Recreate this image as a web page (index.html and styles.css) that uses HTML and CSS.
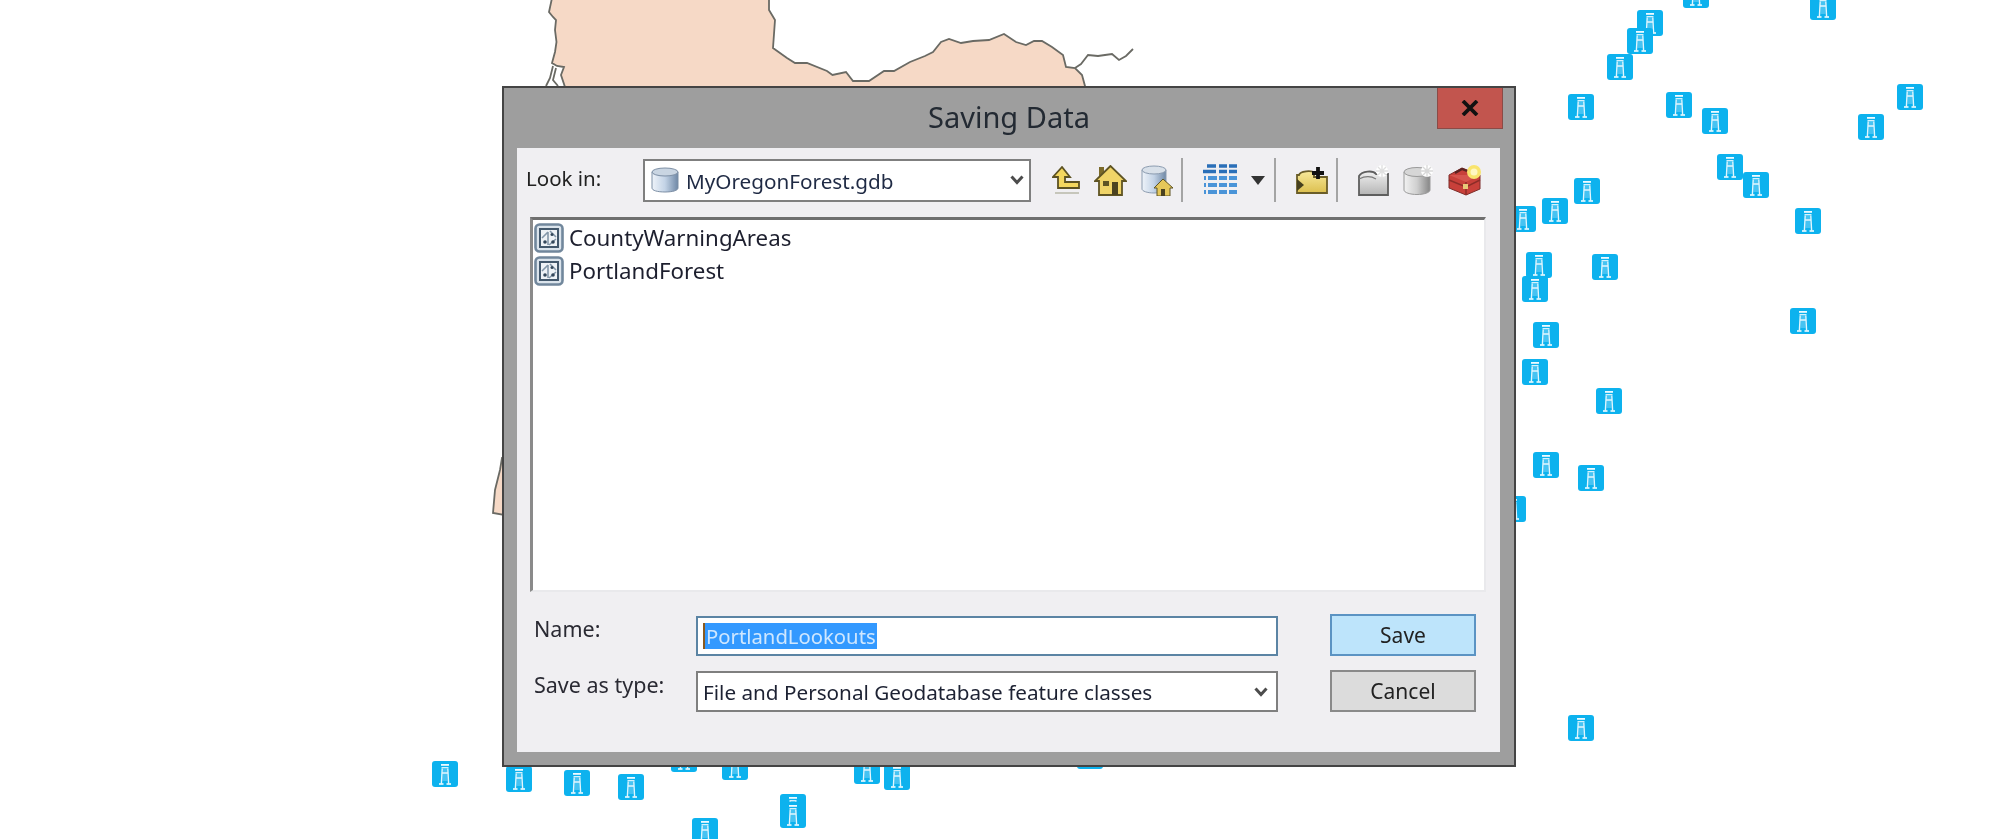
FILE: index.html
```html
<!DOCTYPE html>
<html lang="en">
<head>
  <meta charset="UTF-8">
  <title>Saving Data</title>
  <link rel="stylesheet" href="styles.css">
</head>
<body>

<svg class="defs" width="0" height="0">
  <defs>
    <symbol id="tower" viewBox="0 0 26 26">
      <rect width="26" height="26" rx="3" fill="#0db2ee"/>
      <rect x="9" y="3" width="8" height="1.800" fill="#eefaff"/>
      <rect x="9.500" y="6" width="7" height="1.400" fill="#d4f2fd"/>
      <rect x="10.500" y="8" width="5" height="12" fill="#7fd4f5" opacity=".5"/>
      <path d="M10.200 7.500 9.400 22.500M15.800 7.500l.8 15M10 12h6" stroke="#e2f6fe" stroke-width="1.400" fill="none"/>
      <path d="M7 23h4.500M14.500 23H19" stroke="#fff" stroke-width="1.500"/>
    </symbol>
    <symbol id="feature" viewBox="0 0 30 30">
      <rect x="1.500" y="1.500" width="27" height="27" rx="4" fill="#dbe4ec" stroke="#71879c" stroke-width="2.600"/>
      <rect x="6" y="6" width="18" height="18" fill="#eef2f6" stroke="#43586c" stroke-width="2"/>
      <path d="M8 15l6-6M16 8l6 6M15 22l7-6M14 9v13" stroke="#8497a9" stroke-width="1.600"/>
      <circle cx="11" cy="19" r="1.800" fill="#33475a"/>
      <circle cx="19" cy="19" r="1.800" fill="#33475a"/>
      <circle cx="18" cy="11.500" r="1.500" fill="#33475a"/>
    </symbol>
    <symbol id="chevron" viewBox="0 0 14 12">
      <path d="M1.500 2.500l5.500 6 5.500-6" fill="none" stroke="#4c4c4c" stroke-width="3"/>
    </symbol>
    <linearGradient id="dbBlue" x1="0" x2="1" y1="0" y2="0">
      <stop offset="0" stop-color="#eef3f9"/>
      <stop offset=".5" stop-color="#c3d3e6"/>
      <stop offset="1" stop-color="#6f88a6"/>
    </linearGradient>
    <linearGradient id="dbGrey" x1="0" x2="1" y1="0" y2="0">
      <stop offset="0" stop-color="#f2f2f2"/>
      <stop offset=".5" stop-color="#cfcfcf"/>
      <stop offset="1" stop-color="#868686"/>
    </linearGradient>
    <linearGradient id="folderGrey" x1="0" x2="0" y1="0" y2="1">
      <stop offset="0" stop-color="#f0f0f0"/>
      <stop offset="1" stop-color="#b4b4b4"/>
    </linearGradient>
    <linearGradient id="folderYellow" x1="0" x2="0" y1="0" y2="1">
      <stop offset="0" stop-color="#f7e99a"/>
      <stop offset="1" stop-color="#dcbf4e"/>
    </linearGradient>
  </defs>
</svg>

<div class="screen">

  <!-- map behind the dialog -->
  <div class="map">
    <svg class="land" width="2004" height="839" viewBox="0 0 2004 839">
      <path class="coast" d="M552 -2 549 12 553 17 556 20 555 30 556.500 42 555 52 552 63 557 66 564 67 561 75 566 90H1086L1085 86 1082 75 1075 68 1066 67 1063 55 1052 47 1042 41 1034 41 1026 45 1016 42 1004 34 989 40 973 41 961 43 949 39 941 42 933 52 925 56 910 62 894 71 884 71 869 81 853 81 846 72 832.500 75 827 71 807 63 795 63 787 58 773 48 775 20 769 10 769 -2Z"/>
      <path class="river" d="M1075 68 1081 64 1088 55 1098 56 1105 55 1112 54 1119 60 1126 56 1133 49"/>
      <path class="river" d="M553 66 550 78 546 86M556 68 553 80 558 86"/>
      <path class="coast" d="M502 458 500 470 495 490 493 513 504 515V458Z"/>
    </svg>
    <svg class="pin" style="left:1683px;top:-18px"><use href="#tower"/></svg>
    <svg class="pin" style="left:1810px;top:-6px"><use href="#tower"/></svg>
    <svg class="pin" style="left:1637px;top:10px"><use href="#tower"/></svg>
    <svg class="pin" style="left:1627px;top:28px"><use href="#tower"/></svg>
    <svg class="pin" style="left:1607px;top:54px"><use href="#tower"/></svg>
    <svg class="pin" style="left:1568px;top:94px"><use href="#tower"/></svg>
    <svg class="pin" style="left:1666px;top:92px"><use href="#tower"/></svg>
    <svg class="pin" style="left:1702px;top:108px"><use href="#tower"/></svg>
    <svg class="pin" style="left:1897px;top:84px"><use href="#tower"/></svg>
    <svg class="pin" style="left:1858px;top:114px"><use href="#tower"/></svg>
    <svg class="pin" style="left:1717px;top:154px"><use href="#tower"/></svg>
    <svg class="pin" style="left:1743px;top:172px"><use href="#tower"/></svg>
    <svg class="pin" style="left:1795px;top:208px"><use href="#tower"/></svg>
    <svg class="pin" style="left:1574px;top:178px"><use href="#tower"/></svg>
    <svg class="pin" style="left:1542px;top:198px"><use href="#tower"/></svg>
    <svg class="pin" style="left:1510px;top:206px"><use href="#tower"/></svg>
    <svg class="pin" style="left:1526px;top:252px"><use href="#tower"/></svg>
    <svg class="pin" style="left:1592px;top:254px"><use href="#tower"/></svg>
    <svg class="pin" style="left:1522px;top:276px"><use href="#tower"/></svg>
    <svg class="pin" style="left:1533px;top:322px"><use href="#tower"/></svg>
    <svg class="pin" style="left:1522px;top:359px"><use href="#tower"/></svg>
    <svg class="pin" style="left:1596px;top:388px"><use href="#tower"/></svg>
    <svg class="pin" style="left:1790px;top:308px"><use href="#tower"/></svg>
    <svg class="pin" style="left:1533px;top:452px"><use href="#tower"/></svg>
    <svg class="pin" style="left:1578px;top:465px"><use href="#tower"/></svg>
    <svg class="pin" style="left:1500px;top:496px"><use href="#tower"/></svg>
    <svg class="pin" style="left:1568px;top:715px"><use href="#tower"/></svg>
    <svg class="pin" style="left:432px;top:761px"><use href="#tower"/></svg>
    <svg class="pin" style="left:506px;top:766px"><use href="#tower"/></svg>
    <svg class="pin" style="left:564px;top:770px"><use href="#tower"/></svg>
    <svg class="pin" style="left:618px;top:774px"><use href="#tower"/></svg>
    <svg class="pin" style="left:671px;top:746px"><use href="#tower"/></svg>
    <svg class="pin" style="left:722px;top:754px"><use href="#tower"/></svg>
    <svg class="pin" style="left:780px;top:794px"><use href="#tower"/></svg>
    <svg class="pin" style="left:780px;top:802px"><use href="#tower"/></svg>
    <svg class="pin" style="left:854px;top:758px"><use href="#tower"/></svg>
    <svg class="pin" style="left:884px;top:764px"><use href="#tower"/></svg>
    <svg class="pin" style="left:692px;top:818px"><use href="#tower"/></svg>
    <svg class="pin" style="left:1077px;top:743px"><use href="#tower"/></svg>
  </div>

  <div class="dialog">
    <div class="titlebar">
      <span></span>
      <h1>Saving Data</h1>
      <div class="close-btn">
        <svg width="18" height="16" viewBox="0 0 18 16"><path d="M2 1l14 14M16 1 2 15" stroke="#111" stroke-width="3.800"/></svg>
      </div>
    </div>

    <div class="client">
      <div class="toolbar">
        <label class="look-label">Look in:</label>
        <div class="combo">
          <svg class="combo-icon" width="28" height="26" viewBox="0 0 28 26">
            <path d="M1 5v16c0 2.500 5.500 4 13 4s13-1.500 13-4V5Z" fill="url(#dbBlue)" stroke="#7d8fa5"/>
            <ellipse cx="14" cy="5" rx="13" ry="4" fill="#c9d5e2" stroke="#7d8fa5"/>
          </svg>
          <span class="combo-text">MyOregonForest.gdb</span>
          <svg class="chevron" width="14" height="12"><use href="#chevron"/></svg>
        </div>

        <div class="tool-group first">
          <svg width="28" height="29" viewBox="0 0 28 29">
            <path d="M10 1 1 11h5v11h21v-6H13v-5h5Z" fill="#f3d75f" stroke="#5c5222" stroke-width="1.800"/>
            <path d="M3 27h24" stroke="#b9b9a8" stroke-width="1.500"/>
          </svg>
          <svg width="33" height="31" viewBox="0 0 33 31">
            <path d="M5 2h5v6L5 13Z" fill="#7b6a2a"/>
            <path d="M16.500 1 1 16h4v14h23V16h4Z" fill="#f0d468" stroke="#5f5424" stroke-width="1.800"/>
            <rect x="9" y="16" width="6" height="5" fill="#5f5424"/>
            <rect x="18" y="17" width="6" height="13" fill="#4b4220"/>
          </svg>
          <svg width="32" height="31" viewBox="0 0 32 31">
            <path d="M1 5v19c0 2 5 4 12 4s12-2 12-4V5Z" fill="url(#dbBlue)" stroke="#8c9cb0"/>
            <ellipse cx="13" cy="5" rx="12" ry="4" fill="#d8e0e9" stroke="#8c9cb0"/>
            <path d="M22 14 13 23h3v8h13v-8h3Z" fill="#e5c75a" stroke="#5f5424"/>
            <rect x="20" y="24" width="4" height="7" fill="#4b4220"/>
          </svg>
        </div>
        <span class="tool-sep"></span>

        <div class="tool-group">
          <svg class="grid-icon" width="34" height="32" viewBox="0 0 34 32">
            <path d="M4 2h9M16 2h8M26 2h8M0 7.500h13M16 7.500h8M26 7.500h8" stroke="#2a6fb8" stroke-width="3.600"/>
            <path d="M1 14h2M5 14h9M16 14h8M26 14h8M1 21h2M5 21h9M16 21h8M26 21h8M1 28h2M5 28h9M16 28h8M26 28h8" stroke="#4a94d8" stroke-width="4"/>
          </svg>
          <svg class="tri" width="14" height="9" viewBox="0 0 14 9"><path d="M0 0h14L7 9Z" fill="#333"/></svg>
        </div>
        <span class="tool-sep narrow"></span>

        <div class="tool-group">
          <svg width="32" height="27" viewBox="0 0 32 27">
            <path d="M1 26V8h2c1-4 13-5 15-2v4h13v16Z" fill="url(#folderYellow)" stroke="#6a5d28" stroke-width="1.800"/>
            <path d="M1 12l7 6-7 6Z" fill="#46401f"/>
            <path d="M22 0v12M16 6h12" stroke="#111" stroke-width="3.800"/>
          </svg>
        </div>
        <span class="tool-sep"></span>

        <div class="tool-group">
          <svg width="31" height="31" viewBox="0 0 31 31">
            <path d="M1 30V11c3-5 14-6 17-2h12v21Z" fill="url(#folderGrey)" stroke="#5e5e5e" stroke-width="1.800"/>
            <path d="M1 14c6-3 12-3 17 0" fill="none" stroke="#7a7a7a" stroke-width="1.200"/>
            <circle cx="24" cy="6" r="6" fill="#fff"/>
            <path d="M24 0v12M18 6h12M20 2l8 8M28 2l-8 8" stroke="#dfdfdf" stroke-width="1.300"/>
          </svg>
          <svg width="31" height="31" viewBox="0 0 31 31">
            <path d="M1 7v18c0 2.500 6 4.500 13 4.500s13-2 13-4.500V7Z" fill="url(#dbGrey)" stroke="#9a9a9a"/>
            <ellipse cx="14" cy="7" rx="13" ry="4.500" fill="#d6d6d6" stroke="#9a9a9a"/>
            <circle cx="24" cy="6" r="6" fill="#fff"/>
            <path d="M24 0v12M18 6h12M20 2l8 8M28 2l-8 8" stroke="#d8d8d8" stroke-width="1.300"/>
          </svg>
          <svg width="34" height="32" viewBox="0 0 34 32">
            <path d="M1 11 14 4l18 7v14l-14 6-17-7Z" fill="#c8403a" stroke="#7d2d2a"/>
            <path d="M1 11l17 7 14-7" fill="#e0645c" opacity=".6"/>
            <path d="M1 16l17 7 14-7M18 18v13" fill="none" stroke="#8d2d28" stroke-width="1.500"/>
            <path d="M7 9 14 5l5 2" fill="none" stroke="#5a2422" stroke-width="2.400"/>
            <rect x="15" y="20" width="5" height="5" fill="#e8c878"/>
            <circle cx="26" cy="8" r="7" fill="#f9e46d"/>
            <circle cx="26" cy="8" r="3.500" fill="#fff7c0"/>
          </svg>
        </div>
      </div>

      <div class="file-list">
        <div class="file-row">
          <svg width="30" height="30"><use href="#feature"/></svg>
          <span>CountyWarningAreas</span>
        </div>
        <div class="file-row">
          <svg width="30" height="30"><use href="#feature"/></svg>
          <span>PortlandForest</span>
        </div>
      </div>

      <div class="save-form">
        <label class="form-label">Name:</label>
        <div class="field name-field">
          <span class="caret"></span><span class="selected">PortlandLookouts</span>
        </div>
        <button class="btn save-btn">Save</button>

        <label class="form-label">Save as type:</label>
        <div class="field type-field">
          <span>File and Personal Geodatabase feature classes</span>
          <svg class="chevron" width="14" height="12"><use href="#chevron"/></svg>
        </div>
        <button class="btn cancel-btn">Cancel</button>
      </div>
    </div>
  </div>
</div>

</body>
</html>
```

FILE: styles.css
```css
* {
  margin: 0;
  padding: 0;
  box-sizing: border-box;
}

body {
  width: 2004px;
  height: 839px;
  overflow: hidden;
  background-color: white;
  font-family: 'Noto Sans', sans-serif;
  color: #222;
}

.defs {
  display: block;
}

.screen {
  position: relative;
  width: 2004px;
  height: 839px;
  overflow: hidden;
  filter: blur(0.5px);
}

/* Map */
.map {
  position: absolute;
  inset: 0;
}

.land {
  position: absolute;
  left: 0;
  top: 0;
}

.coast {
  fill: #f6d9c6;
  stroke: #6a6a64;
  stroke-width: 1.800;
}

.river {
  fill: none;
  stroke: #6a6a64;
  stroke-width: 1.800;
}

.pin {
  position: absolute;
  width: 26px;
  height: 26px;
}

/* Dialog window */
.dialog {
  position: absolute;
  left: 502px;
  top: 86px;
  width: 1014px;
  height: 681px;
  display: flex;
  flex-direction: column;
  background-color: #9e9e9e;
  border: 2px solid #444;
}

.titlebar {
  height: 60px;
  display: grid;
  grid-template-columns: 1fr auto 1fr;
  align-items: start;
}

.titlebar h1 {
  font-size: 29px;
  font-weight: 400;
  line-height: 58px;
  color: #232a33;
}

.close-btn {
  justify-self: end;
  width: 66px;
  height: 41px;
  margin-right: 11px;
  display: flex;
  align-items: center;
  justify-content: center;
  background-color: #c2554e;
  border: 1px solid #8a4b47;
  border-top: none;
}

.client {
  flex: 1;
  margin: 0 14px 13px 13px;
  padding-top: 10px;
  display: flex;
  flex-direction: column;
  background-color: #f0eff2;
}

/* Toolbar row */
.toolbar {
  height: 44px;
  padding-left: 9px;
  display: flex;
  align-items: center;
}

.look-label {
  width: 117px;
  font-size: 20.500px;
  margin-top: -5px;
}

.combo {
  width: 388px;
  height: 43px;
  padding: 0 5px 0 6px;
  display: flex;
  align-items: center;
  background-color: white;
  border: 2px solid #7f7f7f;
}

.combo-text {
  flex: 1;
  margin-left: 7px;
  margin-top: 2px;
  font-size: 20.700px;
  color: #1f2a44;
}

.tool-group {
  display: flex;
  align-items: center;
  gap: 14px;
}

.tool-group.first {
  margin-left: 21px;
}

.tool-sep {
  width: 2px;
  height: 44px;
  margin: 0 20px 0 8px;
  background-color: #a4a4a4;
}

.tool-sep.narrow {
  margin-left: 9px;
}

/* File list */
.file-list {
  height: 375px;
  margin: 15px 14px 0 13px;
  padding: 1px 0 0 1px;
  background-color: white;
  border-top: 3px solid #6f6f6f;
  border-left: 3px solid #8a8a8a;
  border-right: 2px solid #e9e9ec;
  border-bottom: 2px solid #e9e9ec;
}

.file-row {
  height: 33px;
  display: flex;
  align-items: center;
  gap: 5px;
  font-size: 22.300px;
  color: #1d1f2e;
}

/* Name / type form */
.save-form {
  margin-top: 22px;
  padding-left: 17px;
  display: grid;
  grid-template-columns: 110px 582px 146px;
  grid-template-rows: 42px 42px;
  column-gap: 52px;
  row-gap: 14px;
}

.save-form .btn {
  grid-column: 3;
}

.form-label {
  padding-top: 1px;
  font-size: 21.500px;
  line-height: 28px;
  white-space: nowrap;
  color: #2a2a33;
}

.field {
  align-self: end;
  height: 41px;
  padding: 0 8px 0 5px;
  display: flex;
  align-items: center;
  justify-content: space-between;
  background-color: white;
  border: 2px solid #7f7f7f;
  font-size: 20.700px;
  color: #1d2233;
}

.name-field {
  height: 40px;
  justify-content: flex-start;
  border-color: #5b84a4;
  font-size: 20.300px;
}

.selected {
  padding: 0 1px;
  line-height: 26px;
  background-color: #3399ff;
  color: #cfe7ff;
}

.caret {
  width: 2px;
  height: 26px;
  background-color: #8a5a20;
}

.btn {
  font-family: inherit;
  font-size: 21px;
  color: #222;
  border-width: 2px;
  border-style: solid;
}

.save-btn {
  background-color: #bde4fb;
  border-color: #5b93c3;
}

.cancel-btn {
  background-color: #dcdcdc;
  border-color: #8a8a8a;
}
```
